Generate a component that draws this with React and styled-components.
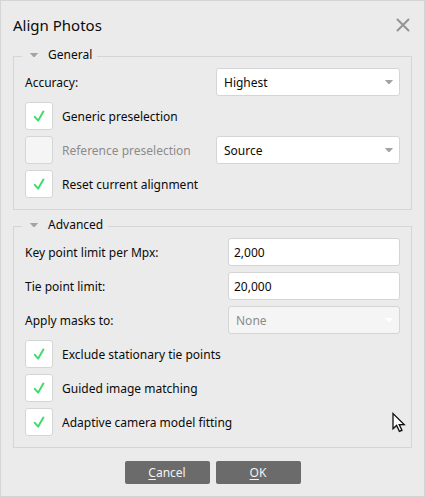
import React, { useState } from "react";
import styled, { createGlobalStyle } from "styled-components";

const GlobalStyle = createGlobalStyle`
  *, *::before, *::after { box-sizing: border-box; }
  body {
    margin: 0;
    background: #ebebeb;
    color: #0a0a0a;
    font: 12px/17px "Noto Sans", sans-serif;
  }
  button, input, select { font: inherit; color: inherit; margin: 0; }
`;

const Dialog = styled.form`
  position: relative;
  min-height: 100vh;
  padding: 12px;
  border: 1px solid #d5d5d5;
  background: #ebebeb;
`;

const TitleBar = styled.header`
  display: flex;
  align-items: center;
  justify-content: space-between;
  height: 24px;
  margin-bottom: 9px;
`;

const Title = styled.h1`
  margin: 0;
  font-size: 15px;
  line-height: 20px;
  font-weight: 400;
`;

const CloseButton = styled.button`
  display: flex;
  padding: 0 1px 1px 0;
  border: 0;
  background: none;
`;

const Group = styled.fieldset`
  min-width: 0;
  margin: 0 0 6px;
  padding: 1px 11px 11px;
  border: 1px solid #d5d5d5;
`;

const Legend = styled.legend`
  height: 21px;
  margin-left: -3px;
  padding: 0 5px;
`;

const Disclosure = styled.button`
  display: flex;
  align-items: center;
  gap: 10px;
  padding: 0 0 0 3px;
  border: 0;
  background: none;
`;

const Rows = styled.div`
  display: grid;
  gap: 6px;
`;

const Row = styled.div`
  display: grid;
  grid-template-columns: ${(p) => p.$columns || "1fr"};
  align-items: center;
  min-height: 28px;
`;

const CheckLabel = styled.label`
  display: flex;
  align-items: center;
  gap: 9px;
  color: ${(p) => (p.$disabled ? "#8c8c8c" : "inherit")};
`;

const CheckBox = styled.span`
  display: grid;
  width: 28px;
  height: 28px;
  > * { grid-area: 1 / 1; }
  svg { visibility: hidden; pointer-events: none; }
  input:checked + svg { visibility: visible; }
`;

const CheckInput = styled.input`
  appearance: none;
  width: 28px;
  height: 28px;
  border: 1px solid #d5d5d5;
  border-radius: 3px;
  background: #fff;
  &:disabled { background: #f5f5f5; }
`;

const SelectBox = styled.span`
  display: grid;
  align-items: center;
  > * { grid-area: 1 / 1; }
  svg { justify-self: end; margin-right: 7px; pointer-events: none; }
`;

const Select = styled.select`
  appearance: none;
  width: 100%;
  height: 28px;
  padding: 1px 20px 0 7px;
  border: 1px solid #d5d5d5;
  border-radius: 3px;
  background: #fff;
  &:disabled { background: #f5f5f5; color: #8c8c8c; opacity: 1; }
`;

const TextInput = styled.input`
  width: 100%;
  height: 28px;
  padding: 0 5px;
  border: 1px solid #d5d5d5;
  border-radius: 3px;
  background: #fff;
`;

const Actions = styled.footer`
  display: flex;
  justify-content: center;
  gap: 6px;
  padding-top: 7px;
`;

const ActionButton = styled.button`
  width: 85px;
  height: 23px;
  padding: 0;
  border: 0;
  border-radius: 2px;
  background: #6b6b6b;
  color: #f2f2f2;
  u { text-underline-offset: 2px; text-decoration-thickness: 1px; text-decoration-skip-ink: none; }
`;

const Pointer = styled.svg`
  position: absolute;
  left: 390px;
  top: 410px;
  pointer-events: none;
`;

function Arrow({ color = "#a3a3a3" }) {
  return (
    <svg width="8" height="6" viewBox="0 0 8 6" aria-hidden="true">
      <path d="M0.3 1H7.7V1.6L4.6 5H3.4L0.3 1.6Z" fill={color} />
    </svg>
  );
}

function Section({ title, children }) {
  const [open, setOpen] = useState(true);
  return (
    <Group>
      <Legend>
        <Disclosure type="button" aria-expanded={open} onClick={() => setOpen(!open)}>
          <Arrow />
          {title}
        </Disclosure>
      </Legend>
      {open && <Rows>{children}</Rows>}
    </Group>
  );
}

function Check({ label, checked = true, disabled }) {
  return (
    <CheckLabel $disabled={disabled}>
      <CheckBox>
        <CheckInput type="checkbox" defaultChecked={checked} disabled={disabled} />
        <svg width="28" height="28" viewBox="0 0 28 28" fill="none" aria-hidden="true">
          <path d="M9.8 14.8L13.2 18.6L18.4 9.6" stroke="#3ddc70" strokeWidth="2" strokeLinecap="round" strokeLinejoin="round" />
        </svg>
      </CheckBox>
      {label}
    </CheckLabel>
  );
}

function DropDown({ value, disabled, ...rest }) {
  return (
    <SelectBox>
      <Select defaultValue={value} disabled={disabled} {...rest}>
        <option>{value}</option>
      </Select>
      <Arrow color={disabled ? "#fff" : undefined} />
    </SelectBox>
  );
}

const GENERAL = "191px 1fr";
const ADVANCED = "203px 1fr";

export default function App() {
  return (
    <>
      <GlobalStyle />
      <Dialog onSubmit={(e) => e.preventDefault()}>
        <TitleBar>
          <Title>Align Photos</Title>
          <CloseButton type="button" aria-label="Close">
            <svg width="16" height="16" viewBox="0 0 16 16" aria-hidden="true">
              <path d="M2.5 2.5L13.5 13.5M13.5 2.5L2.5 13.5" stroke="#949494" strokeWidth="2" strokeLinecap="round" />
            </svg>
          </CloseButton>
        </TitleBar>

        <Section title="General">
          <Row $columns={GENERAL}>
            <label htmlFor="accuracy">Accuracy:</label>
            <DropDown id="accuracy" value="Highest" />
          </Row>
          <Row><Check label="Generic preselection" /></Row>
          <Row $columns={GENERAL}>
            <Check label="Reference preselection" checked={false} disabled />
            <DropDown value="Source" aria-label="Reference preselection mode" />
          </Row>
          <Row><Check label="Reset current alignment" /></Row>
        </Section>

        <Section title="Advanced">
          <Row $columns={ADVANCED}>
            <label htmlFor="key-points">Key point limit per Mpx:</label>
            <TextInput id="key-points" defaultValue="2,000" />
          </Row>
          <Row $columns={ADVANCED}>
            <label htmlFor="tie-points">Tie point limit:</label>
            <TextInput id="tie-points" defaultValue="20,000" />
          </Row>
          <Row $columns={ADVANCED}>
            <label htmlFor="masks">Apply masks to:</label>
            <DropDown id="masks" value="None" disabled />
          </Row>
          <Row><Check label="Exclude stationary tie points" /></Row>
          <Row><Check label="Guided image matching" /></Row>
          <Row><Check label="Adaptive camera model fitting" /></Row>
        </Section>

        <Actions>
          <ActionButton type="button"><span><u>C</u>ancel</span></ActionButton>
          <ActionButton type="submit"><span><u>O</u>K</span></ActionButton>
        </Actions>

        <Pointer width="18" height="24" viewBox="0 0 18 24" aria-hidden="true">
          <path d="M2 2V17.5L5.6 14.2L8.4 20.3L10.9 19.2L8.2 13.4H13.2Z" transform="translate(1 1)" fill="#000" opacity="0.2" />
          <path d="M2 2.5V17.8L5.6 14.4L8.4 20.3L10.9 19.2L8.2 13.6H13.2Z" fill="#fff" stroke="#111" strokeWidth="1.3" />
        </Pointer>
      </Dialog>
    </>
  );
}
